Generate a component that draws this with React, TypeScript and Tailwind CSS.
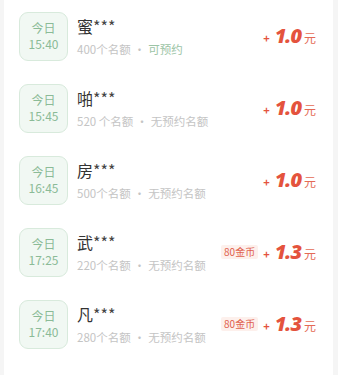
import React from "react";

type Row = { name: string; date: string; time: string; count: string; status: string; avail?: boolean; coins?: string; price: string };

const rows: Row[] = [
  { name: "蜜", date: "今日", time: "15:40", count: "400个名额", status: "可预约", avail: true, price: "1.0" },
  { name: "啪", date: "今日", time: "15:45", count: "520 个名额", status: "无预约名额", price: "1.0" },
  { name: "房", date: "今日", time: "16:45", count: "500个名额", status: "无预约名额", price: "1.0" },
  { name: "武", date: "今日", time: "17:25", count: "220个名额", status: "无预约名额", coins: "80金币", price: "1.3" },
  { name: "凡", date: "今日", time: "17:40", count: "280个名额", status: "无预约名额", coins: "80金币", price: "1.3" },
];

export default function App() {
  return (
    <div
      className="w-[338px] h-[375px] overflow-hidden bg-[#f5f5f5] pl-[4px] pr-[5px]"
      style={{ fontFamily: '"Noto Sans CJK SC", "Noto Sans", sans-serif' }}
    >
      <div className="bg-white h-full">
        {rows.map((r, i) => (
          <div key={i} className="h-[72px] flex items-center pl-[15px] pr-[17px]">
            <div className="w-[49px] h-[49px] rounded-[9px] border border-[#d8eadc] bg-[#f1f8f3] flex flex-col items-center justify-center text-[#8bbb97] text-[12px] leading-[16px]">
              <span>{r.date}</span>
              <span>{r.time}</span>
            </div>
            <div className="ml-[9px] flex flex-col flex-1 min-w-0">
              <div className="text-[16px] leading-[20px] text-[#333] flex items-center mt-[1px]">
                <span>{r.name}</span>
                <span className="text-[16px] text-[#444]">***</span>
              </div>
              <div className="mt-[5px] text-[11.5px] leading-[16px] text-[#c4c4c4] whitespace-nowrap">
                <span>{r.count}</span>
                <span className="mx-[3px]">·</span>
                <span className={r.avail ? "text-[#9cc4a6]" : ""}>{r.status}</span>
              </div>
            </div>
            <div className="flex items-center">
              {r.coins && (
                <span className="mr-[5px] bg-[#fdf0ec] text-[#e0604c] text-[10px] leading-[14px] px-[3px] rounded-[2px]">
                  {r.coins}
                </span>
              )}
              <div className="flex items-baseline text-[#e4533d]">
                <span className="text-[11px] font-bold mr-[5px]">+</span>
                <span
                  className="text-[20px] font-extrabold italic leading-[24px] tracking-[-1px]"
                  style={{ fontFamily: '"Open Sans", "Noto Sans", sans-serif' }}
                >
                  {r.price}
                </span>
                <span className="text-[12px] ml-[3px] text-[#e46a55]">元</span>
              </div>
            </div>
          </div>
        ))}
      </div>
    </div>
  );
}
